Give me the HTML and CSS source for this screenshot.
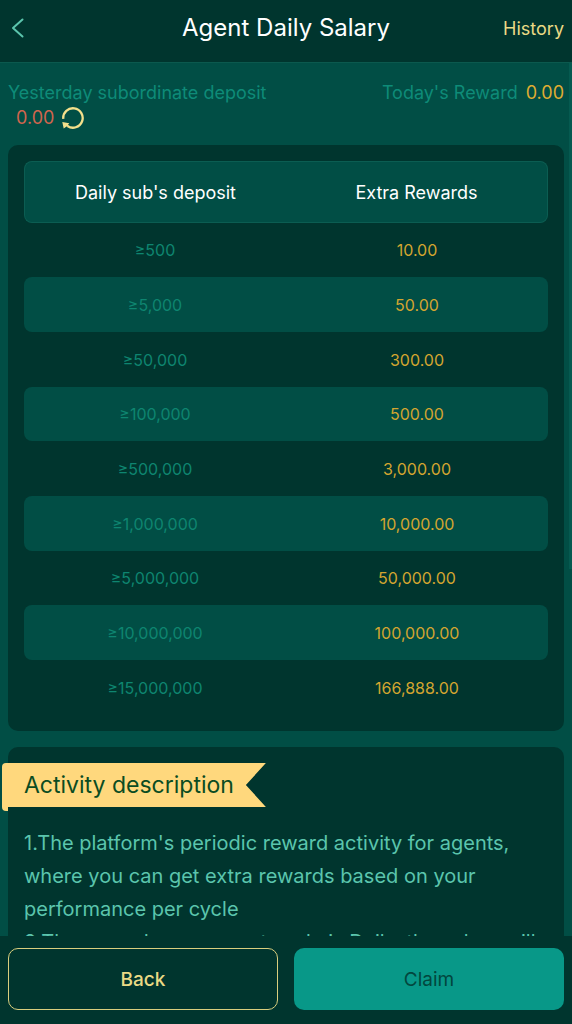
FILE: index.html
```html
<!DOCTYPE html>
<html lang="en">
<head>
<meta charset="utf-8">
<meta name="viewport" content="width=device-width, initial-scale=1">
<title>Agent Daily Salary</title>
<link rel="stylesheet" href="styles.css">
</head>
<body>
<div class="app">
  <header class="topbar">
    <button class="back-icon" type="button" aria-label="Go back">
      <svg width="14" height="20" viewBox="0 0 14 20" fill="none" stroke="currentColor" stroke-width="2" stroke-linecap="round" stroke-linejoin="round"><path d="M11.500 1.500 2 10l9.500 8.500"/></svg>
    </button>
    <h1 class="title">Agent Daily Salary</h1>
    <a class="history" href="#history">History</a>
  </header>

  <main class="content">
    <div class="scroll-thumb"></div>
    <section class="summary">
      <div class="summary-item">
        <div class="label">Yesterday subordinate deposit</div>
        <div class="deposit">
          <span class="deposit-value">0.00</span>
          <button class="refresh" type="button" aria-label="Refresh">
            <svg width="22" height="22" viewBox="0 0 22 22" fill="none"><path d="M1.300 11.800A9.700 9.700 0 1 1 5.500 19" stroke="currentColor" stroke-width="2.300"/><path d="M.300 15 7.300 16.200 5.900 18 7 19.600 4.600 19.500 1.700 21.600Z" fill="currentColor"/></svg>
          </button>
        </div>
      </div>
      <div class="reward"><span class="label">Today's Reward</span><span class="reward-value">0.00</span></div>
    </section>

    <section class="card">
      <table class="tiers">
        <thead><tr><th scope="col">Daily sub's deposit</th><th scope="col">Extra Rewards</th></tr></thead>
        <tbody>
          <tr><td>≥500</td><td>10.00</td></tr>
          <tr><td>≥5,000</td><td>50.00</td></tr>
          <tr><td>≥50,000</td><td>300.00</td></tr>
          <tr><td>≥100,000</td><td>500.00</td></tr>
          <tr><td>≥500,000</td><td>3,000.00</td></tr>
          <tr><td>≥1,000,000</td><td>10,000.00</td></tr>
          <tr><td>≥5,000,000</td><td>50,000.00</td></tr>
          <tr><td>≥10,000,000</td><td>100,000.00</td></tr>
          <tr><td>≥15,000,000</td><td>166,888.00</td></tr>
        </tbody>
      </table>
    </section>

    <section class="card description">
      <h2 class="ribbon"><span class="ribbon-body">Activity description</span></h2>
      <p>1.The platform's periodic reward activity for agents, where you can get extra rewards based on your performance per cycle</p>
      <p>2.The reward assessment cycle is Daily, the salary will</p>
    </section>
  </main>

  <footer class="actions">
    <button class="btn btn-outline" type="button">Back</button>
    <button class="btn btn-solid" type="button">Claim</button>
  </footer>
</div>
</body>
</html>
```
FILE: styles.css
```css
* { box-sizing: border-box; }

body {
  margin: 0;
  background: #014e45;
  font-family: Inter, "Liberation Sans", sans-serif;
  color: #5bc5ad;
}

button {
  font: inherit;
  border: 0;
  padding: 0;
  background: none;
  cursor: pointer;
}

svg { display: block; }

.app {
  display: flex;
  flex-direction: column;
  height: 100vh;
}

.topbar {
  display: grid;
  grid-template-columns: 1fr auto 1fr;
  align-items: center;
  flex: none;
  height: 63px;
  padding: 0 8px 6px;
  background: #00352e;
  border-bottom: 1px solid #0b594e;
}

.back-icon {
  justify-self: start;
  padding: 0 3px;
  color: #5bc5ad;
}

.title {
  margin: 0;
  font-size: 24px;
  font-weight: 400;
  line-height: 32px;
  color: #fff;
}

.history {
  justify-self: end;
  font-size: 18px;
  color: #eada85;
  text-decoration: none;
}

.content {
  position: relative;
  flex: 1;
  min-height: 0;
  overflow: hidden;
  padding: 0 8px;
}

.scroll-thumb {
  position: absolute;
  top: 0;
  right: 0;
  width: 3px;
  height: 58%;
  background: #055a50;
}

.summary {
  display: flex;
  justify-content: space-between;
  padding: 17px 0 15px;
  font-size: 18px;
  line-height: 25px;
}

.label { color: #0e8b78; }

.deposit {
  display: flex;
  align-items: center;
  gap: 8px;
  padding-left: 8px;
}

.deposit-value { color: #d0654e; }
.refresh { color: #f3e08b; }

.reward {
  display: flex;
  gap: 8px;
}

.reward-value { color: #dfac32; }

.card {
  margin-bottom: 16px;
  padding: 16px;
  border-radius: 10px;
  background: #00352e;
}

.tiers {
  width: 100%;
  table-layout: fixed;
  border-collapse: separate;
  border-spacing: 0;
  text-align: center;
  font-size: 16px;
}

.tiers th {
  height: 62px;
  padding: 0;
  border: solid #0b5d52;
  border-width: 1px 0;
  background: #014e45;
  font-size: 18px;
  font-weight: 400;
  color: #fff;
}

.tiers td {
  height: 55px;
  padding: 0;
  color: #0e8570;
}

.tiers td + td { color: #d3a530; }

.tiers tr:nth-child(3n + 1) td { height: 54px; }
.tiers tr:nth-child(even) td { background: #014e45; }

.tiers tr > :first-child { border-radius: 8px 0 0 8px; }
.tiers tr > :last-child { border-radius: 0 8px 8px 0; }
.tiers th:first-child { border-left-width: 1px; }
.tiers th:last-child { border-right-width: 1px; }

.description {
  font-size: 20px;
  line-height: 33px;
}

.description p { margin: 0; }

.ribbon {
  display: flex;
  width: max-content;
  margin: 0 0 20px -22px;
  font-size: 23px;
  font-weight: 400;
  line-height: 44px;
  color: #0b4c22;
}

.ribbon::before {
  content: "";
  width: 6px;
  margin-bottom: -4px;
  border-radius: 4px 0 0 4px;
  background: #ffd87d;
}

.ribbon-body {
  padding: 0 32px 0 16px;
  background: #ffd87d;
  clip-path: polygon(0 0, 100% 0, calc(100% - 20px) 50%, 100% 100%, 0 100%);
}

.actions {
  display: grid;
  grid-template-columns: 1fr 1fr;
  gap: 16px;
  flex: none;
  padding: 12px 8px 14px;
  background: #00352e;
}

.btn {
  height: 62px;
  border-radius: 10px;
  font-size: 19px;
}

.btn-outline {
  border: 1px solid #d8ce7e;
  font-weight: 500;
  color: #eada85;
}

.btn-solid {
  background: #089888;
  color: #02473e;
}
```
